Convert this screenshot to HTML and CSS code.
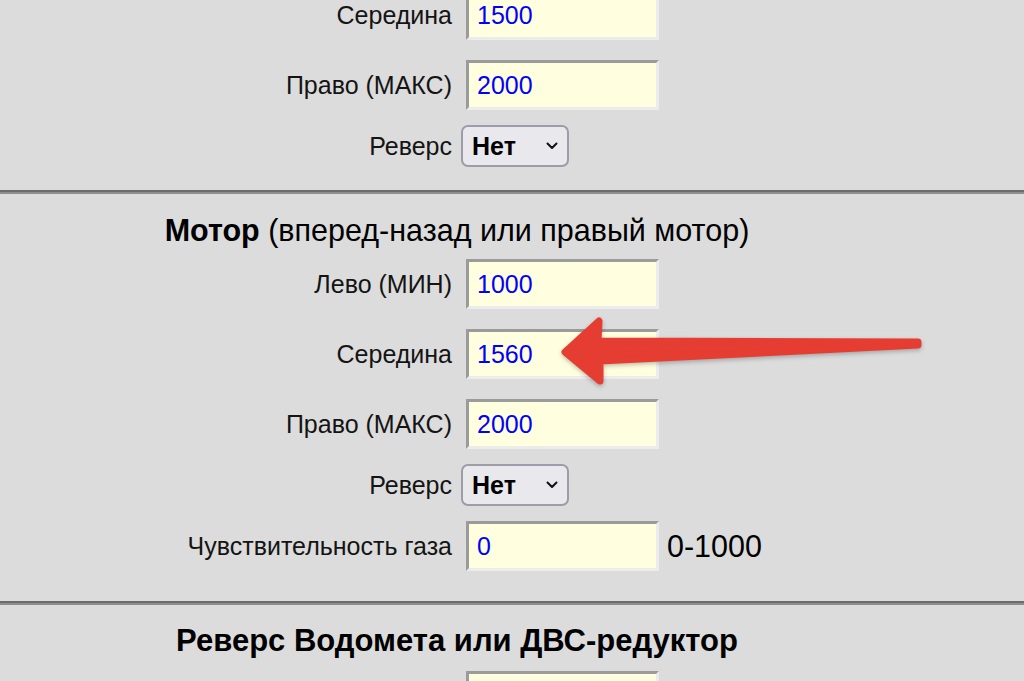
FILE: index.html
```html
<!DOCTYPE html>
<html lang="ru">
  <head>
    <meta charset="UTF-8" />
    <title>Настройки</title>
    <link rel="stylesheet" href="styles.css">
  </head>
  <body>
    <div class="page">
      <!-- Руль (конец блока) -->
      <section class="group first">
        <div class="row">
          <label class="label">Середина</label>
          <input class="num" type="text" value="1500" />
        </div>
        <div class="row">
          <label class="label">Право (МАКС)</label>
          <input class="num" type="text" value="2000" />
        </div>
        <div class="row row-select">
          <label class="label">Реверс</label>
          <span class="select-wrap">
            <select class="select"><option>Нет</option><option>Да</option></select>
            <svg class="chevron" viewBox="0 0 12 8" width="12" height="8"><path d="M1.5 1.5 L6 6 L10.5 1.5" fill="none" stroke="#111" stroke-width="2" stroke-linecap="round" stroke-linejoin="round"/></svg>
          </span>
        </div>
      </section>
      <hr class="sep" />

      <!-- Мотор -->
      <section class="group">
        <h2 class="title"><b>Мотор</b> (вперед-назад или правый мотор)</h2>
        <div class="row">
          <label class="label">Лево (МИН)</label>
          <input class="num" type="text" value="1000" />
        </div>
        <div class="row">
          <label class="label">Середина</label>
          <input class="num" type="text" value="1560" />
        </div>
        <div class="row">
          <label class="label">Право (МАКС)</label>
          <input class="num" type="text" value="2000" />
        </div>
        <div class="row row-select">
          <label class="label">Реверс</label>
          <span class="select-wrap">
            <select class="select"><option>Нет</option><option>Да</option></select>
            <svg class="chevron" viewBox="0 0 12 8" width="12" height="8"><path d="M1.5 1.5 L6 6 L10.5 1.5" fill="none" stroke="#111" stroke-width="2" stroke-linecap="round" stroke-linejoin="round"/></svg>
          </span>
        </div>
        <div class="row">
          <label class="label">Чувствительность газа</label>
          <input class="num" type="text" value="0" />
          <span class="hint">0-1000</span>
        </div>
      </section>
      <hr class="sep" />

      <!-- Реверс водомета -->
      <section class="group">
        <h2 class="title title-bold"><b>Реверс Водомета или ДВС-редуктор</b></h2>
        <div class="row">
          <label class="label"></label>
          <input class="num" type="text" value="" />
        </div>
      </section>

      <svg class="arrow" width="1024" height="681" viewBox="0 0 1024 681">
        <path d="M565 352 L599 321 L598 341 L918 342 L918 345 L600 361 L600 381 Z"
              fill="#e53d32" stroke="#e53d32" stroke-width="7" stroke-linejoin="round" />
      </svg>
    </div>
  </body>
</html>
```

FILE: styles.css
```css
:root {
  --bg: #dcdcdc;
  --field: #ffffe0;
  --label-col: 452px;
}
body {
  margin: 0;
  background: var(--bg);
  font-family: "Liberation Sans", Arial, sans-serif;
  color: #141414;
  overflow: hidden;
}
.page {
  position: relative;
  width: 1024px;
  height: 681px;
  overflow: hidden;
}
.group {
  width: 914px;
  padding: 18px 0 20px;
}
.group.first {
  margin-top: -20px;
  padding-top: 0;
  padding-bottom: 18px;
}
.title {
  margin: 0;
  font-size: 30.5px;
  line-height: 37px;
  font-weight: normal;
  text-align: center;
  color: #000;
}
.title b {
  font-weight: bold;
}
.title-bold {
  font-size: 31px;
  line-height: 35px;
  margin-bottom: 3px;
}
.row {
  display: flex;
  align-items: center;
  padding: 10px 0;
}
.row-select {
  padding: 5px 0;
}
.label {
  width: var(--label-col);
  flex: none;
  text-align: right;
  font-size: 25px;
}
.num {
  box-sizing: border-box;
  width: 193px;
  height: 50px;
  margin: 0 0 0 14px;
  padding: 0 8px;
  background: var(--field);
  border-style: solid;
  border-width: 3px;
  border-color: #9b9b9b #ececec #ececec #9b9b9b;
  font-family: "Liberation Sans", Arial, sans-serif;
  font-size: 25px;
  color: #0000ff;
  outline: none;
}
.hint {
  margin-left: 8px;
  font-size: 30.5px;
  color: #000;
}
.select-wrap {
  position: relative;
  display: inline-flex;
  margin-left: 9px;
}
.select {
  -webkit-appearance: none;
  appearance: none;
  box-sizing: border-box;
  width: 108px;
  height: 42px;
  padding: 0 0 0 9px;
  background: #e9e9ed;
  border: 2px solid #9d9daa;
  border-radius: 7px;
  font-family: "Liberation Sans", Arial, sans-serif;
  font-size: 25px;
  font-weight: bold;
  color: #000;
}
.chevron {
  position: absolute;
  right: 11px;
  top: 17px;
  pointer-events: none;
}
.sep {
  margin: 0;
  height: 0;
  border: 0;
  border-top: 2px solid #6c6c6c;
  border-bottom: 2px solid #8e8e8e;
}
.arrow {
  position: absolute;
  left: 0;
  top: 0;
  pointer-events: none;
  filter: drop-shadow(0 2px 2px rgba(0, 0, 0, 0.25));
}
```
